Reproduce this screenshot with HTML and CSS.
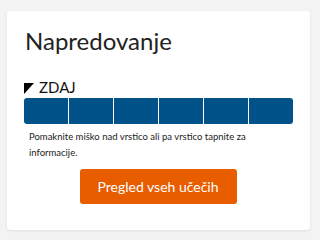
FILE: index.html
```html
<!DOCTYPE html>
<html lang="sl">
<head>
<meta charset="utf-8">
<link rel="stylesheet" href="styles.css">
</head>
<body>
<div class="card">
  <h2 class="title">Napredovanje</h2>
  <div class="now"><span class="tri"></span><span class="now-label">ZDAJ</span></div>
  <div class="bar">
    <div class="seg"></div><div class="seg"></div><div class="seg"></div>
    <div class="seg"></div><div class="seg"></div><div class="seg"></div>
  </div>
  <p class="hint">Pomaknite miško nad vrstico ali pa vrstico tapnite za informacije.</p>
  <div class="actions"><button class="btn">Pregled vseh učečih</button></div>
</div>
</body>
</html>
```
FILE: styles.css
```css
html, body { margin: 0; padding: 0; }
body {
  background: #f3f3f3;
  font-family: Lato, "Open Sans", sans-serif;
  width: 316px;
  height: 237px;
  overflow: hidden;
}
.card {
  margin: 11px 0 0 7px;
  width: 303px;
  height: 219px;
  box-sizing: border-box;
  background: #fff;
  border-radius: 4px;
  box-shadow: 0 1px 3px rgba(0,0,0,0.08);
  padding: 15px 17px 0 17px;
}
.title {
  margin: 0 0 0 1px;
  font-size: 24px;
  font-weight: 400;
  line-height: 30px;
  color: #222;
}
.now {
  display: flex;
  align-items: flex-start;
  margin-top: 24px;
  height: 15px;
}
.tri {
  margin-top: 3px;
  width: 0; height: 0;
  border-top: 11px solid #000;
  border-right: 10px solid transparent;
}
.now-label {
  margin-left: 5px;
  font-size: 15px;
  line-height: 15px;
  color: #111;
}
.bar {
  margin-top: 3px;
  height: 26px;
  display: flex;
  gap: 1px;
  background: #fff;
  border-radius: 3px;
  overflow: hidden;
  width: 269px;
}
.seg { flex: 1; background: #02528a; }
.hint {
  margin: 5px 0 0 5px;
  font-size: 9.5px;
  line-height: 16px;
  color: #222;
}
.actions { display: flex; justify-content: center; margin-top: 8px; padding-right: 1px; }
.btn {
  width: 157px;
  height: 35px;
  border: 0;
  border-radius: 3px;
  background: #e85d00;
  color: #fff;
  font-family: Lato, sans-serif;
  font-size: 14px;
  padding: 0;
}
```
